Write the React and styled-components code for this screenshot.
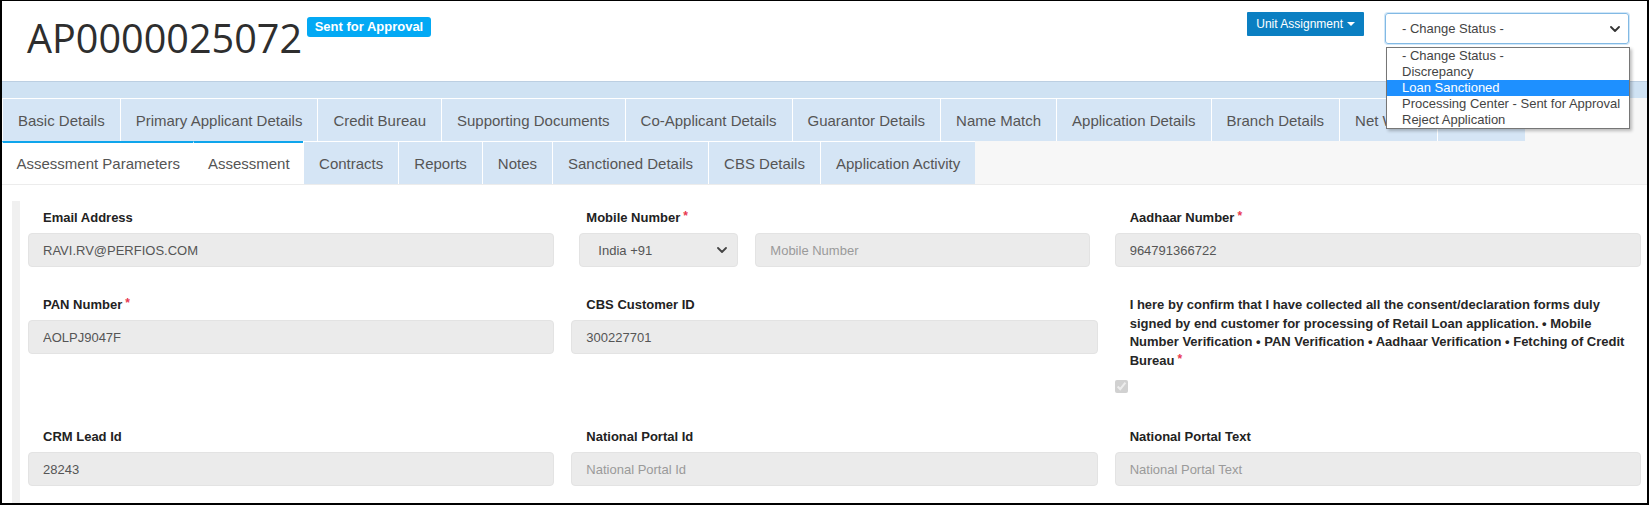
import React from 'react';
import styled, { createGlobalStyle } from 'styled-components';

const GlobalStyle = createGlobalStyle`
  * { box-sizing: border-box; }
  body {
    margin: 0;
    background: #fff;
    font-family: "Liberation Sans", Arial, sans-serif;
  }
`;

// Page frame
const Frame = styled.div`
  height: 505px;
  border: 2px solid #000;
  border-top-width: 1px;
  overflow: hidden;
  background: #fff;
`;

// Header
const Header = styled.header`
  display: flex;
  align-items: flex-start;
  height: 81px;
  padding: 0 18px 0 25px;
  border-bottom: 1px solid #bccfe2;
`;

const Title = styled.h1`
  margin: 17px 0 0;
  font-family: "Open Sans", "Liberation Sans", sans-serif;
  font-size: 39.6px;
  font-weight: 400;
  line-height: 40px;
  color: #2e2e2e;
`;

const Badge = styled.span`
  margin: 16px 0 0 5px;
  height: 20px;
  padding: 0 7.5px;
  line-height: 20px;
  border-radius: 3px;
  background: #03a9f4;
  color: #fff;
  font-size: 13px;
  font-weight: 700;
  white-space: nowrap;
`;

const Actions = styled.div`
  margin-left: auto;
  display: flex;
  align-items: flex-start;
  gap: 21px;
  padding-top: 11px;
`;

const UnitButton = styled.button`
  display: flex;
  align-items: center;
  gap: 4px;
  height: 24px;
  padding: 0 9px;
  border: none;
  border-radius: 1px;
  background: #0b7fc2;
  color: #fff;
  font-family: "Liberation Sans", Arial, sans-serif;
  font-size: 12px;
`;

const Caret = styled.span`
  width: 0;
  height: 0;
  border-top: 4px solid #fff;
  border-left: 4px solid transparent;
  border-right: 4px solid transparent;
`;

const StatusSelect = styled.div`
  position: relative;
  margin-top: 1px;
  width: 244px;
  height: 31px;
  display: flex;
  align-items: center;
  justify-content: space-between;
  padding: 0 8px 0 16px;
  border: 1px solid #82b9e4;
  border-radius: 3px;
  box-shadow: 0 0 0 1px rgba(102, 175, 233, 0.3);
  font-size: 13px;
  color: #444;
`;

const ListBox = styled.ul`
  position: absolute;
  top: 33px;
  left: 0;
  width: 244px;
  margin: 0;
  padding: 0;
  list-style: none;
  background: #fff;
  border: 1px solid #767676;
  box-shadow: 2px 2px 3px rgba(0, 0, 0, 0.25);
  z-index: 5;
`;

const Option = styled.li`
  height: 16px;
  line-height: 16px;
  padding-left: 15px;
  font-size: 13px;
  white-space: nowrap;
  color: ${p => (p.$selected ? '#fff' : '#444')};
  background: ${p => (p.$selected ? '#1e90ff' : 'transparent')};
`;

// Tabs
const Band = styled.div`
  height: 16px;
  background: #cfe2f3;
`;

const TabBar = styled.nav`
  background: #f7f7f7;
  border-bottom: 1px solid #ececec;
`;

const TabRow = styled.div`
  display: flex;
  height: 43px;
`;

const Tab = styled.div`
  display: flex;
  align-items: center;
  padding: 0 ${p => (p.$active ? '13.5px' : '15px')};
  font-size: 15px;
  color: #555;
  white-space: nowrap;
  background: ${p => (p.$active ? '#fff' : '#d5e5f5')};
  border-left: 1px solid #fff;
  border-top: ${p => (p.$active ? '2px solid #0ea5ec' : '1px solid #fff')};
`;

// Form
const Panel = styled.section`
  margin: 16px 0 0 10px;
  border-left: 8px solid #f0f0f0;
  padding: 8px 6px 0 8px;
`;

const Grid = styled.div`
  display: grid;
  grid-template-columns: repeat(3, 1fr);
  column-gap: 17px;
`;

const Field = styled.div`
  margin-bottom: 29px;
`;

const Label = styled.div`
  padding-left: 15px;
  margin-bottom: 6px;
  font-size: 13px;
  font-weight: 700;
  line-height: 18px;
  color: #222;
`;

const Req = styled.span`
  margin-left: 3px;
  color: #e8384f;
  font-size: 12px;
  vertical-align: top;
  line-height: 14px;
`;

const Input = styled.input`
  display: block;
  width: 100%;
  height: 34px;
  padding: 0 14px;
  border: 1px solid #e3e3e3;
  border-radius: 4px;
  background: #ebebeb;
  font-family: "Liberation Sans", Arial, sans-serif;
  font-size: 13px;
  color: #555;
  outline: none;
  &::placeholder { color: #9a9a9a; }
`;

const PhoneRow = styled.div`
  display: grid;
  grid-template-columns: 159px 1fr;
  gap: 17px;
  padding: 0 8px;
`;

const FakeSelect = styled.div`
  display: flex;
  align-items: center;
  justify-content: space-between;
  height: 34px;
  padding: 0 10px 0 18px;
  border: 1px solid #e3e3e3;
  border-radius: 4px;
  background: #ebebeb;
  font-size: 13px;
  color: #555;
`;

const Declaration = styled.div`
  padding-left: 15px;
  font-size: 13px;
  font-weight: 700;
  line-height: 18.6px;
  color: #262626;
`;

const CheckRow = styled.div`
  margin: 10px 0 35px;
  height: 13px;
  input {
    margin: 0;
    width: 13px;
    height: 13px;
    display: block;
  }
`;

const Chevron = ({ color = '#333' }) => (
  <svg width="10" height="6" viewBox="0 0 10 6" fill="none">
    <path d="M1 1l4 4 4-4" stroke={color} strokeWidth="1.8" strokeLinecap="round" strokeLinejoin="round" />
  </svg>
);

const topTabs = [
  'Basic Details',
  'Primary Applicant Details',
  'Credit Bureau',
  'Supporting Documents',
  'Co-Applicant Details',
  'Guarantor Details',
  'Name Match',
  'Application Details',
  'Branch Details',
  'Net Worth',
  'Charges',
];

const subTabs = [
  { label: 'Assessment Parameters', active: true },
  { label: 'Assessment', active: true },
  { label: 'Contracts' },
  { label: 'Reports' },
  { label: 'Notes' },
  { label: 'Sanctioned Details' },
  { label: 'CBS Details' },
  { label: 'Application Activity' },
];

const statusOptions = [
  '- Change Status -',
  'Discrepancy',
  'Loan Sanctioned',
  'Processing Center - Sent for Approval',
  'Reject Application',
];

const App = () => {
  return (
    <Frame>
      <GlobalStyle />
      <Header>
        <Title>AP0000025072</Title>
        <Badge>Sent for Approval</Badge>
        <Actions>
          <UnitButton>
            Unit Assignment <Caret />
          </UnitButton>
          <StatusSelect>
            <span>- Change Status -</span>
            <Chevron />
            <ListBox>
              {statusOptions.map(o => (
                <Option key={o} $selected={o === 'Loan Sanctioned'}>{o}</Option>
              ))}
            </ListBox>
          </StatusSelect>
        </Actions>
      </Header>

      <Band />
      <TabBar>
        <TabRow>
          {topTabs.map(t => <Tab key={t}>{t}</Tab>)}
        </TabRow>
        <TabRow>
          {subTabs.map(t => <Tab key={t.label} $active={t.active}>{t.label}</Tab>)}
        </TabRow>
      </TabBar>

      <Panel>
        <Grid>
          <Field>
            <Label>Email Address</Label>
            <Input readOnly value="RAVI.RV@PERFIOS.COM" />
          </Field>
          <Field>
            <Label>Mobile Number<Req>*</Req></Label>
            <PhoneRow>
              <FakeSelect>
                <span>India +91</span>
                <Chevron color="#444" />
              </FakeSelect>
              <Input readOnly placeholder="Mobile Number" />
            </PhoneRow>
          </Field>
          <Field>
            <Label>Aadhaar Number<Req>*</Req></Label>
            <Input readOnly value="964791366722" />
          </Field>

          <Field>
            <Label>PAN Number<Req>*</Req></Label>
            <Input readOnly value="AOLPJ9047F" />
          </Field>
          <Field>
            <Label>CBS Customer ID</Label>
            <Input readOnly value="300227701" />
          </Field>
          <div>
            <Declaration>
              I here by confirm that I have collected all the consent/declaration forms duly
              signed by end customer for processing of Retail Loan application. • Mobile
              Number Verification • PAN Verification • Aadhaar Verification • Fetching of Credit
              Bureau<Req>*</Req>
            </Declaration>
            <CheckRow>
              <input type="checkbox" checked disabled readOnly />
            </CheckRow>
          </div>

          <Field>
            <Label>CRM Lead Id</Label>
            <Input readOnly value="28243" />
          </Field>
          <Field>
            <Label>National Portal Id</Label>
            <Input readOnly placeholder="National Portal Id" />
          </Field>
          <Field>
            <Label>National Portal Text</Label>
            <Input readOnly placeholder="National Portal Text" />
          </Field>
        </Grid>
      </Panel>
    </Frame>
  );
};

export default App;
